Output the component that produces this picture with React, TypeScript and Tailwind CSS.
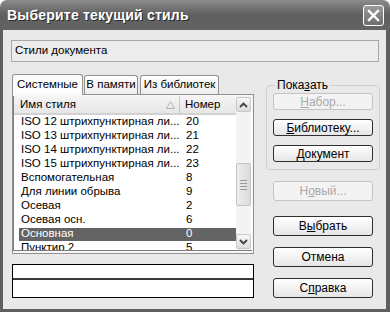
import React from "react";

const rows = [
  { name: "ISO 12 штрихпунктирная ли...", num: "20" },
  { name: "ISO 13 штрихпунктирная ли...", num: "21" },
  { name: "ISO 14 штрихпунктирная ли...", num: "22" },
  { name: "ISO 15 штрихпунктирная ли...", num: "23" },
  { name: "Вспомогательная", num: "8" },
  { name: "Для линии обрыва", num: "9" },
  { name: "Осевая", num: "2" },
  { name: "Осевая осн.", num: "6" },
  { name: "Основная", num: "0", selected: true },
  { name: "Пунктир 2", num: "5" },
];

// XP style push button
function Btn({
  children,
  disabled,
  tall,
}: {
  children: React.ReactNode;
  disabled?: boolean;
  tall?: boolean;
}) {
  return (
    <div
      className={
        (tall ? "h-[20px] " : "h-[17px] ") +
        (disabled
          ? "border-[#c4c4c4] text-[#a9a9a9] bg-[#f3f3f3] "
          : "border-[#2e2e2e] text-black bg-linear-to-b from-white to-[#e6e6e6] ") +
        "w-[100px] border rounded-[3px] flex items-center justify-center text-[12px] leading-none"
      }
    >
      {children}
    </div>
  );
}

function ScrollArrow({ up }: { up?: boolean }) {
  return (
    <div className="h-[15px] w-[15px] rounded-[2px] border border-[#c8c8c8] bg-linear-to-b from-[#f7f7f7] to-[#dcdcdc] flex items-center justify-center">
      <svg width="9" height="6" viewBox="0 0 9 6">
        <path
          d={up ? "M1 5 L4.5 1.5 L8 5" : "M1 1 L4.5 4.5 L8 1"}
          fill="none"
          stroke="#404040"
          strokeWidth="1.8"
        />
      </svg>
    </div>
  );
}

export default function App() {
  return (
    <div className="w-[390px] h-[312px] bg-white flex flex-col font-['Liberation_Sans',Arial,sans-serif] text-[12px] text-black overflow-hidden">
      {/* Title bar */}
      <div className="h-[30px] shrink-0 rounded-t-[7px] bg-linear-to-b from-[#8c8c8c] via-[#5f5f5f] to-[#646464] flex items-center justify-between pl-[7px] pr-[6px]">
        <span className="text-white font-bold text-[14px] tracking-[0.2px] [text-shadow:1px_1px_0_#2a2a2a]">
          Выберите текущий стиль
        </span>
        <div className="w-[21px] h-[21px] rounded-[3px] border border-white bg-linear-to-b from-[#9a9a9a] to-[#6e6e6e] flex items-center justify-center">
          <svg width="13" height="13" viewBox="0 0 13 13">
            <path d="M2 2 L11 11 M11 2 L2 11" stroke="white" strokeWidth="2.4" strokeLinecap="square" />
          </svg>
        </div>
      </div>

      {/* Body */}
      <div className="flex-1 bg-[#e9e9e9] border-l-[3px] border-r-[4px] border-b-[3px] border-[#5f5f5f] flex flex-col">
        <div className="mt-[10px] ml-[8px] mr-[7px] h-[22px] border border-[#a8a8a8] bg-[#ececec] flex items-center pl-[3px] text-[11.5px]">
          Стили документа
        </div>

        <div className="flex">
          {/* Left column */}
          <div className="ml-[9px] w-[242px] mt-[12px] flex flex-col">
            {/* Tabs */}
            <div className="flex items-end h-[20px] text-[11.5px]">
              <div className="relative z-10 h-[21px] -mb-[1px] w-[71px] border border-b-0 border-[#919191] rounded-t-[3px] bg-[#fcfcfc] flex items-center justify-center">
                Системные
              </div>
              <div className="h-[19px] w-[54px] ml-[1px] border border-b-0 border-[#919191] rounded-t-[3px] bg-linear-to-b from-white to-[#ececec] flex items-center justify-center">
                В памяти
              </div>
              <div className="h-[19px] w-[79px] ml-[2px] border border-b-0 border-[#919191] rounded-t-[3px] bg-linear-to-b from-white to-[#ececec] flex items-center justify-center">
                Из библиотек
              </div>
            </div>
            {/* Tab panel */}
            <div className="h-[160px] border border-[#919191] bg-[#f7f7f7] pt-[1px] pr-[1px] pb-[2px]">
              <div className="h-full border-l border-b border-[#7c7c7c] bg-white flex">
                <div className="w-[222px] flex flex-col overflow-hidden text-[11.5px]">
                  {/* Header */}
                  <div className="h-[19px] shrink-0 flex bg-linear-to-b from-[#f5f5f5] to-[#e6e6e6] border-b-[2px] border-[#d2d2d2]">
                    <div className="w-[166px] flex items-center justify-between pl-[6px] pr-[4px] border-r border-[#c8c8c8]">
                      <span>Имя стиля</span>
                      <svg width="9" height="8" viewBox="0 0 9 8">
                        <path d="M0.5 7.5 L4.5 0.5 L8.5 7.5 Z" fill="none" stroke="#b5b5b5" strokeWidth="1" />
                      </svg>
                    </div>
                    <div className="flex-1 flex items-center pl-[5px]">Номер</div>
                  </div>
                  {/* Rows */}
                  <div className="flex flex-col">
                    {rows.map((r) => (
                      <div key={r.name} className="h-[14px] flex items-center pl-[5px]">
                        <div
                          className={
                            (r.selected ? "bg-[#646464] text-white " : "") +
                            "flex-1 h-[13px] flex items-center leading-none"
                          }
                        >
                          <span className="w-[167px] pl-[2px] whitespace-nowrap overflow-hidden">{r.name}</span>
                          <span>{r.num}</span>
                        </div>
                      </div>
                    ))}
                  </div>
                </div>
                {/* Scrollbar */}
                <div className="w-[15px] bg-[#f3f3f3] flex flex-col pt-[1px] pb-[1px]">
                  <ScrollArrow up />
                  <div className="h-[51px]" />
                  <div className="h-[43px] w-[15px] rounded-[2px] border border-[#c4c4c4] bg-linear-to-r from-[#ededed] to-[#dadada] flex flex-col items-center justify-center gap-[2px]">
                    <div className="w-[7px] h-[1px] bg-[#9a9a9a]" />
                    <div className="w-[7px] h-[1px] bg-[#9a9a9a]" />
                    <div className="w-[7px] h-[1px] bg-[#9a9a9a]" />
                    <div className="w-[7px] h-[1px] bg-[#9a9a9a]" />
                  </div>
                  <div className="flex-1" />
                  <ScrollArrow />
                </div>
              </div>
            </div>
            {/* Bottom boxes */}
            <div className="mt-[10px] h-[34px] border border-black bg-white flex flex-col">
              <div className="h-[15px] border-b-[2px] border-[#3a3a3a]" />
              <div className="flex-1" />
            </div>
          </div>

          {/* Right column */}
          <div className="ml-[12px] w-[113px] flex flex-col">
            <fieldset className="mt-[17px] h-[91px] border border-[#cfcfcf] rounded-[4px] px-[6px] text-[11px]">
              <legend className="ml-[2px] px-[2px] text-[12px] leading-[12px]">
                Пока<span className="underline">з</span>ать
              </legend>
              <div className="mt-[2px] flex flex-col gap-[9px]">
                <Btn disabled>
                  <span className="underline">Н</span>абор...
                </Btn>
                <Btn>
                  <span className="underline">Б</span>иблиотеку...
                </Btn>
                <Btn>
                  <span className="underline">Д</span>окумент
                </Btn>
              </div>
            </fieldset>
            <div className="ml-[7px] mt-[11px] flex flex-col">
              <Btn disabled tall>
                Н<span className="underline">о</span>вый...
              </Btn>
              <div className="h-[15px]" />
              <Btn tall>
                В<span className="underline">ы</span>брать
              </Btn>
              <div className="h-[11px]" />
              <Btn tall>Отмена</Btn>
              <div className="h-[11px]" />
              <Btn tall>
                С<span className="underline">п</span>равка
              </Btn>
            </div>
          </div>
        </div>
      </div>
    </div>
  );
}
